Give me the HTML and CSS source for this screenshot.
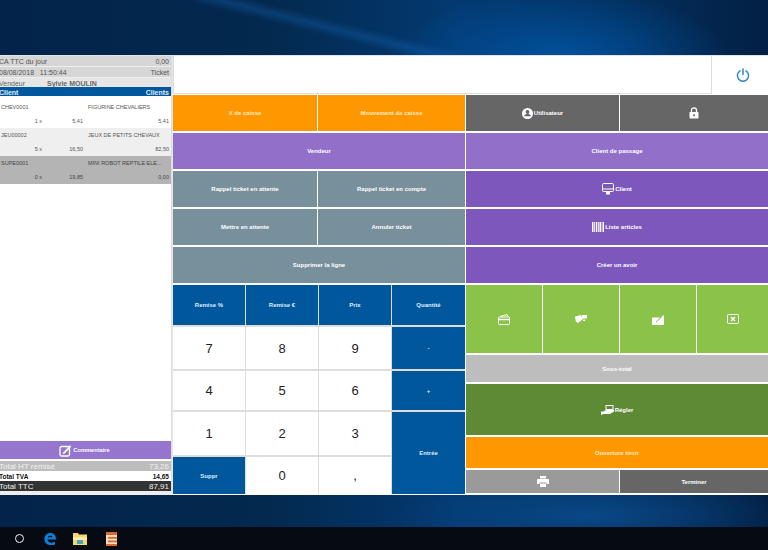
FILE: index.html
```html
<!DOCTYPE html>
<html lang="fr">
<head>
<meta charset="utf-8">
<title>Caisse</title>
<link rel="stylesheet" href="styles.css">
</head>
<body>
<div class="desktop">
  <div class="app">
    <aside class="ticket">
      <div class="info gray"><span>CA TTC du jour</span><span>0,00</span></div>
      <div class="info gray"><span>08/08/2018 &nbsp; 11:50:44</span><span>Ticket</span></div>
      <div class="info seller"><span class="seller-l">Vendeur</span><span>Sylvie MOULIN</span></div>
      <div class="info client"><span>Client</span><span>Clients</span></div>
      <div class="lines">
        <div class="line"><div class="l1"><span class="code">CHEV0001</span><span class="name">FIGURINE CHEVALIERS</span></div><div class="l2"><span class="qty">1 x</span><span class="pu">5,41</span><span class="tot">5,41</span></div></div>
        <div class="line alt"><div class="l1"><span class="code">JEU00002</span><span class="name">JEUX DE PETITS CHEVAUX</span></div><div class="l2"><span class="qty">5 x</span><span class="pu">16,50</span><span class="tot">82,50</span></div></div>
        <div class="line sel"><div class="l1"><span class="code">SUPE0001</span><span class="name">MINI ROBOT REPTILE ELE...</span></div><div class="l2"><span class="qty">0 x</span><span class="pu">19,85</span><span class="tot">0,00</span></div></div>
      </div>
      <div class="comment">
        <svg width="13" height="13" viewBox="0 0 13 13" fill="none" stroke="#fff" stroke-width="1.3"><rect x="1" y="2.5" width="9.5" height="9.5" rx="1.5"/><path d="M4.5 8.5 11 1.5l1 1-6.5 7-1.5.3z" fill="#fff" stroke-width=".5"/></svg>
        <span>Commentaire</span>
      </div>
      <div class="total t-ht"><span>Total HT remisé</span><span>73,26</span></div>
      <div class="total t-tva"><span>Total TVA</span><span>14,65</span></div>
      <div class="total t-ttc"><span>Total TTC</span><span>87,91</span></div>
    </aside>
    <main class="work">
      <div class="topbar">
        <div class="field"></div>
        <div class="power">
          <svg width="14" height="14" viewBox="0 0 14 14" fill="none" stroke="#2f86c0" stroke-width="1.5" stroke-linecap="round"><path d="M4 2.8a5.6 5.6 0 1 0 6 0"/><path d="M7 1v5.6"/></svg>
        </div>
      </div>
      <div class="panels">
        <section class="mid">
          <div class="row split-mid"><button class="btn orange">X de caisse</button><button class="btn orange">Mouvement de caisse</button></div>
          <div class="row"><button class="btn violet">Vendeur</button></div>
          <div class="row split-mid"><button class="btn slate">Rappel ticket en attente</button><button class="btn slate">Rappel ticket en compte</button></div>
          <div class="row split-mid"><button class="btn slate">Mettre en attente</button><button class="btn slate">Annuler ticket</button></div>
          <div class="row"><button class="btn slate">Supprimer la ligne</button></div>
          <div class="numpad">
            <button class="key blue">Remise %</button><button class="key blue">Remise €</button><button class="key blue">Prix</button><button class="key blue">Quantité</button>
            <button class="key num">7</button><button class="key num">8</button><button class="key num">9</button><button class="key blue">-</button>
            <button class="key num">4</button><button class="key num">5</button><button class="key num">6</button><button class="key blue">+</button>
            <button class="key num">1</button><button class="key num">2</button><button class="key num">3</button><button class="key blue enter">Entrée</button>
            <button class="key blue">Suppr</button><button class="key num">0</button><button class="key num">,</button>
          </div>
        </section>
        <section class="right">
          <div class="row split-right">
            <button class="btn dark">
              <svg width="11" height="11" viewBox="0 0 11 11"><circle cx="5.5" cy="5.5" r="5.5" fill="#fff"/><circle cx="5.5" cy="4" r="1.9" fill="#666"/><path d="M2 8.2c.6-1.6 2-2.1 3.5-2.1s2.9.5 3.5 2.1z" fill="#666"/></svg>
              Utilisateur
            </button>
            <button class="btn dark">
              <svg width="10" height="12" viewBox="0 0 10 12"><path d="M2.5 5V3.3a2.5 2.5 0 0 1 5 0V5" fill="none" stroke="#fff" stroke-width="1.3"/><rect x=".5" y="5" width="9" height="6.5" rx=".8" fill="#fff"/><circle cx="5" cy="8.2" r="1" fill="#666"/></svg>
            </button>
          </div>
          <div class="row"><button class="btn violet">Client de passage</button></div>
          <div class="row"><button class="btn purple">
            <svg width="12" height="12" viewBox="0 0 12 12" fill="none" stroke="#fff"><rect x=".5" y=".5" width="11" height="8" rx="1"/><path d="M.5 6h11"/><path d="M4 9h4v2.5H4z" fill="#fff" stroke="none"/></svg>
            Client</button></div>
          <div class="row"><button class="btn purple">
            <svg width="12" height="10" viewBox="0 0 12 10" fill="#fff"><path d="M0 0h1.5v10H0zM2.2 0h.8v10h-.8zM3.8 0h1.5v10H3.800zM6 0h.8v10H6zM7.5 0H9v10H7.500zM9.700 0h.8v10h-.8zM11 0h1v10h-1z"/></svg>
            Liste articles</button></div>
          <div class="row"><button class="btn purple">Créer un avoir</button></div>
          <div class="pay">
            <button class="btn green">
              <svg width="12" height="11" viewBox="0 0 12 11" fill="none" stroke="#fff"><rect x=".5" y="3" width="11" height="7.5" rx="1"/><path d="M.5 5.5h11" stroke-width="1.4"/><path d="M2 2.5 9 .6l1 2"/></svg>
            </button>
            <button class="btn green">
              <svg width="12" height="8" viewBox="0 0 12 8" fill="#fff"><path d="M0 1.5 6 0l1.500 4.500L3 8 .8 6.500z"/><rect x="7" y="0" width="5" height="3.500"/><path d="M8 4.500h2v1.500H8z"/></svg>
            </button>
            <button class="btn green">
              <svg width="12" height="11" viewBox="0 0 12 11"><path d="M0 3.500h8L5 7 11.500 1l.5 1v9H0z" fill="#fff"/><path d="M4 8l6-5.500" stroke="#8bc34a"/></svg>
            </button>
            <button class="btn green">
              <svg width="12" height="10" viewBox="0 0 12 10" fill="none" stroke="#fff"><rect x=".5" y=".5" width="11" height="9" rx="1"/><path d="M4 3l4 4M8 3 4 7" stroke-width="1.3"/></svg>
            </button>
          </div>
          <div class="row h27"><button class="btn silver">Sous-total</button></div>
          <div class="row h51"><button class="btn moss">
            <svg width="13" height="10" viewBox="0 0 13 10" fill="#fff"><path d="M0 6.500h2.500L5 5h8v1.500L9 9H2.500L0 10z"/><rect x="5" y=".5" width="7" height="4" fill="none" stroke="#fff"/></svg>
            Régler</button></div>
          <div class="row h31"><button class="btn orange">Ouverture tiroir</button></div>
          <div class="row split-right h23">
            <button class="btn steel">
              <svg width="12" height="11" viewBox="0 0 12 11" fill="#fff"><path d="M3 0h6v2.500H3z"/><path d="M1 3h10a1 1 0 0 1 1 1v4h-2.500V6.500h-7V8H0V4a1 1 0 0 1 1-1z"/><path d="M3 7.500h6V11H3z"/></svg>
            </button>
            <button class="btn dark">Terminer</button>
          </div>
        </section>
      </div>
    </main>
  </div>
  <div class="taskbar">
    <span class="cortana"></span>
    <svg class="tb-icon" width="14" height="14" viewBox="0 0 14 14" fill="none"><path d="M1.500 8C1 3.500 4 1 7.500 1 11 1 13 3.500 13 7.500H4.500C4.800 10.500 8.500 11.500 12 9.800V12.500C7.500 14 1.800 12.800 1.500 8zM4.800 5.200H9.500C9.300 3.300 5.500 3.300 4.800 5.200z" fill="#0f7dd6"/></svg>
    <svg class="tb-icon tb-folder" width="14" height="12" viewBox="0 0 14 12"><path d="M0 0h5l1 1.500h8V12H0z" fill="#f6d56e"/><path d="M0 4h14v3H0z" fill="#fdeca8"/><path d="M4 7h6v4H4z" fill="#4aa3b8"/></svg>
    <svg class="tb-icon" width="11" height="14" viewBox="0 0 11 14"><rect width="11" height="14" fill="#f3dcc0"/><path d="M0 0h11v3H0zM2 5h9v1.800H2zM2 8.500h9v1.800H2zM0 12h11v2H0z" fill="#d9692a"/></svg>
  </div>
</div>
</body>
</html>
```
FILE: styles.css
```css
* { box-sizing: border-box; }
html, body { margin: 0; padding: 0; }
body { width: 768px; height: 550px; overflow: hidden; font-family: "Liberation Sans", Arial, sans-serif; }

.desktop {
  width: 768px; height: 550px; overflow: hidden;
  display: flex; flex-direction: column;
  padding-top: 55px;
  background:
    linear-gradient(14deg, transparent 80.3%, rgba(20,100,180,.35) 81.5%, transparent 82.7%),
    radial-gradient(ellipse 170px 70px at 560px 60px, rgba(0,85,165,.9), transparent),
    radial-gradient(ellipse 200px 40px at 590px 515px, rgba(10,75,140,.85), transparent),
    linear-gradient(90deg, #03234a 0, #03294f 35%, #033a72 60%, #03305f 80%, #032044 100%);
}

.app {
  height: 440px; display: flex;
  background: #e6e6e6;
  border-top: 1px solid #dfe6ee;
}

/* Ticket panel */
.ticket {
  width: 174px; margin-left: -2px; flex: none;
  display: flex; flex-direction: column;
  background: #fff; border-right: 1px solid #ddd;
  border-bottom: 4px solid #eee;
  font-size: 7px; color: #666;
}
.info { height: 11px; flex: none; display: flex; justify-content: space-between; align-items: center; padding: 0 2px 0 1px; font-size: 7px; }
.gray { background: #d6d6d6; border-bottom: 1px solid #eee; color: #555; }
.seller { background: #e6e6e6; justify-content: flex-start; height: 9px; padding-top: 1px; }
.seller-l { width: 48px; }
.seller span:last-child { font-weight: bold; }
.client { background: #01579b; color: #dfeeff; height: 9px; font-weight: bold; padding-top: 1px; }

.lines { flex: 1; padding-top: 4px; background: #fff; }
.line { height: 28px; display: flex; flex-direction: column; justify-content: space-between; padding: 2px 2px 3px 3px; font-size: 5.5px; color: #555; }
.alt { background: #efefef; }
.sel { background: #b4b4b4; color: #444; }
.l1, .l2 { display: flex; height: 9px; align-items: center; white-space: nowrap; }
.code { width: 87px; }
.qty { width: 41px; text-align: right; }
.pu { width: 41px; text-align: right; }
.tot { flex: 1; text-align: right; }

.comment {
  height: 18px; flex: none; background: #9575cd; color: #fff;
  display: flex; align-items: center; justify-content: center; gap: 1px;
  font-size: 5.7px; font-weight: bold;
  margin-bottom: 2px;
}
.total { height: 10px; flex: none; display: flex; justify-content: space-between; align-items: center; padding: 0 2px 0 1px; }
.t-ht { background: #bdbdbd; color: #f2f2f2; font-size: 8px; }
.t-tva { background: #fff; color: #111; font-weight: bold; font-size: 6.5px; }
.t-ttc { background: #333; color: #eee; font-size: 8px; }

/* Main */
.work { flex: 1; min-width: 0; display: flex; flex-direction: column; padding-left: 1px; }
.topbar { height: 38px; display: flex; flex: none; background: #fff; }
.field { flex: 1; background: #fff; border: 1px solid #ddd; border-top: 0; }
.power { width: 56px; display: flex; align-items: center; justify-content: center; background: #fff; padding-left: 6px; }

.panels { flex: 1; display: flex; padding-top: 1px; background: #fff; min-height: 0; }
.mid { width: 293px; flex: none; display: flex; flex-direction: column; gap: 2px; padding-right: 1px; }
.right { flex: 1; display: flex; flex-direction: column; gap: 2px; min-width: 0; }
.row { display: flex; gap: 1px; flex: none; height: 36px; }
.split-mid .btn:first-child { flex: 0 0 144px; }
.split-right .btn:first-child { flex: 0 0 153px; }
.pay { display: grid; grid-template-columns: 76px 76px 76px 1fr; gap: 1px; height: 68px; flex: none; }
.h27 { height: 27px; }
.h51 { height: 51px; }
.h31 { height: 31px; }
.h23 { height: 23px; }

.btn {
  flex: 1 1 0; min-width: 0; border: 0; margin: 0; padding: 0;
  display: flex; align-items: center; justify-content: center; gap: 1px;
  font: bold 6px "Liberation Sans", Arial, sans-serif;
  color: #fff;
}
.orange { background: #ff9800; color: #ffe9c4; }
.violet { background: #9270ca; }
.purple { background: #7e57bd; }
.slate { background: #78909c; }
.dark { background: #666; }
.green { background: #8bc34a; }
.silver { background: #bdbdbd; }
.moss { background: #5f8a35; }
.steel { background: #9a9a9a; }

.numpad {
  flex: none; height: 209px;
  display: grid;
  grid-template-columns: 72px 72px 72px 1fr;
  grid-template-rows: 40px 42px 39px 43px 37px;
  gap: 2px 1px;
  background: #ddd;
}
.key {
  border: 0; margin: 0; padding: 0;
  display: flex; align-items: center; justify-content: center;
  font-family: "Liberation Sans", Arial, sans-serif;
}
.blue { background: #01579b; color: #dcecff; font-size: 6px; font-weight: bold; }
.num { background: #fff; color: #222; font-size: 13px; }
.enter { grid-row: span 2; }

/* Taskbar */
.taskbar {
  margin-top: 32px; height: 23px; flex: none; background: #060b13;
  display: flex; align-items: center; padding-left: 15px;
}
.cortana { width: 9px; height: 9px; border: 1.5px solid #f2f2f2; border-radius: 50%; margin-right: 19px; }
.tb-icon { margin-right: 16px; }
.tb-icon.tb-folder { margin-right: 19px; }
```
